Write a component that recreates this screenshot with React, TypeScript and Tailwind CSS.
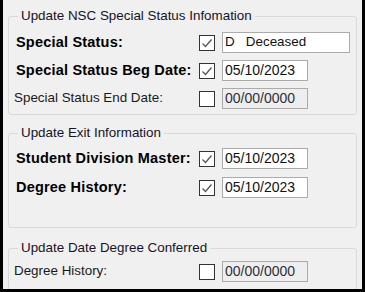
import React from "react";

type Row = {
  label: string;
  bold: boolean;
  checked: boolean;
  value: string;
  wide?: boolean;
  disabled?: boolean;
};

const groups: { title: string; height: string; pt: string; gap: string; rows: Row[] }[] = [
  {
    title: "Update NSC Special Status Infomation",
    height: "h-[107px]",
    pt: "pt-[8px]",
    gap: "gap-[7px]",
    rows: [
      { label: "Special Status:", bold: true, checked: true, value: "D   Deceased", wide: true },
      { label: "Special Status Beg Date:", bold: true, checked: true, value: "05/10/2023" },
      { label: "Special Status End Date:", bold: false, checked: false, value: "00/00/0000", disabled: true },
    ],
  },
  {
    title: "Update Exit Information",
    height: "h-[103px]",
    pt: "pt-[7px]",
    gap: "gap-[8px]",
    rows: [
      { label: "Student Division Master:", bold: true, checked: true, value: "05/10/2023" },
      { label: "Degree History:", bold: true, checked: true, value: "05/10/2023" },
    ],
  },
  {
    title: "Update Date Degree Conferred",
    height: "h-[60px]",
    pt: "pt-[5px]",
    gap: "gap-[8px]",
    rows: [{ label: "Degree History:", bold: false, checked: false, value: "00/00/0000", disabled: true }],
  },
];

function CheckBox({ checked }: { checked: boolean }) {
  return (
    <div className="w-[16px] h-[16px] shrink-0 border border-[#333333] bg-white flex items-center justify-center">
      {checked && (
        <svg width="14" height="14" viewBox="0 0 14 14">
          <polyline points="2.5,7.5 5.5,10.5 11.5,3.5" fill="none" stroke="#555555" strokeWidth="1.3" />
        </svg>
      )}
    </div>
  );
}

function FieldRow({ row }: { row: Row }) {
  return (
    <div className="flex items-center h-[21px]">
      <div
        className={
          row.bold
            ? "w-[183px] shrink-0 font-bold text-[14.5px] tracking-[0.2px] text-black"
            : "w-[185px] shrink-0 -ml-[2px] text-[13.4px] text-[#1a1a1a]"
        }
      >
        {row.label}
      </div>
      <CheckBox checked={row.checked} />
      <div
        className={`ml-[7px] h-[21px] flex items-center pl-[2px] border border-[#ababab] whitespace-pre ${
          row.wide ? "w-[128px] text-[13.4px]" : "w-[86px] text-[14px]"
        } ${row.disabled ? "bg-[#eeeeee] text-[#2e2e3a]" : "bg-white text-[#111111]"}`}
      >
        {row.value}
      </div>
    </div>
  );
}

export default function App() {
  return (
    <div
      className="w-[365px] h-[292px] overflow-hidden bg-[#f0f0f0] border-l-[3px] border-r-[3px] border-b-[3px] border-black flex flex-col pt-[8px]"
      style={{ fontFamily: '"Liberation Sans", Arial, sans-serif' }}
    >
      {groups.map((g, i) => (
        <fieldset
          key={g.title}
          className={`mx-[5px] shrink-0 border border-[#d9d9d9] rounded-[3px] ${g.height} ${
            i === 1 ? "mt-[10px]" : i === 2 ? "mt-[12px]" : ""
          }`}
        >
          <legend className="ml-[9px] px-[3px] leading-[16px] text-[13.4px] text-[#14142a]">{g.title}</legend>
          <div className={`flex flex-col pl-[7px] ${g.pt} ${g.gap}`}>
            {g.rows.map((r) => (
              <FieldRow key={g.title + r.label} row={r} />
            ))}
          </div>
        </fieldset>
      ))}
    </div>
  );
}
